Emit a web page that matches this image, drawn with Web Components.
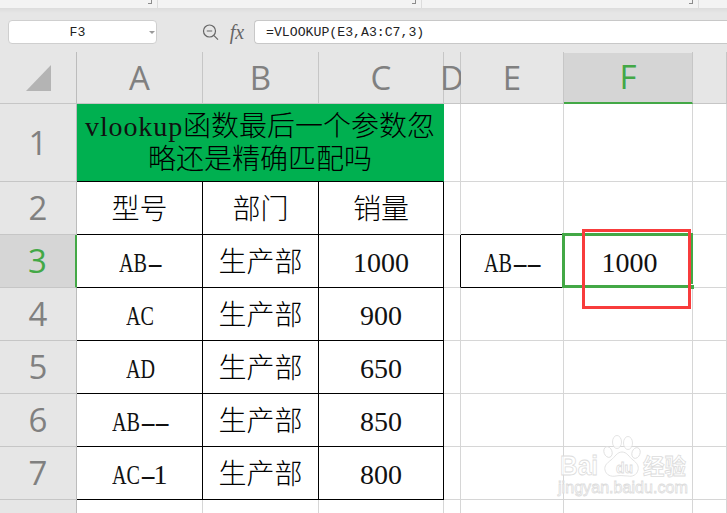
<!DOCTYPE html>
<html lang="zh">
<head>
<meta charset="utf-8">
<title>vlookup</title>
<style>
  html, body { margin: 0; height: 100%; overflow: hidden; background: #fff; }
</style>
</head>
<body>
<sheet-app>
  <ribbon-strip></ribbon-strip>
  <formula-bar name="F3" formula="=VLOOKUP(E3,A3:C7,3)"></formula-bar>
  <sheet-grid>
    <sheet-cell type="corner"><corner-mark></corner-mark></sheet-cell>
    <sheet-cell type="col">A</sheet-cell>
    <sheet-cell type="col">B</sheet-cell>
    <sheet-cell type="col">C</sheet-cell>
    <sheet-cell type="col">D</sheet-cell>
    <sheet-cell type="col">E</sheet-cell>
    <sheet-cell type="col" active>F</sheet-cell>
    <sheet-cell type="col"></sheet-cell>

    <sheet-cell type="row">1</sheet-cell>
    <sheet-cell type="title" style="grid-column: span 3"><half-text>vlookup</half-text>函数最后一个参数忽<br>略还是精确匹配吗</sheet-cell>
    <sheet-cell></sheet-cell><sheet-cell></sheet-cell><sheet-cell></sheet-cell><sheet-cell></sheet-cell>

    <sheet-cell type="row">2</sheet-cell>
    <sheet-cell ink>型号</sheet-cell><sheet-cell ink>部门</sheet-cell><sheet-cell ink>销量</sheet-cell>
    <sheet-cell></sheet-cell><sheet-cell ink-bottom></sheet-cell><sheet-cell></sheet-cell><sheet-cell></sheet-cell>

    <sheet-cell type="row" active>3</sheet-cell>
    <sheet-cell ink><half-text>AB-</half-text></sheet-cell><sheet-cell ink>生产部</sheet-cell><sheet-cell ink><half-text>1000</half-text></sheet-cell>
    <sheet-cell ink-right></sheet-cell>
    <sheet-cell ink><half-text>AB--</half-text></sheet-cell>
    <sheet-cell current><half-text>1000</half-text><cell-marks></cell-marks></sheet-cell>
    <sheet-cell></sheet-cell>

    <sheet-cell type="row">4</sheet-cell>
    <sheet-cell ink><half-text>AC</half-text></sheet-cell><sheet-cell ink>生产部</sheet-cell><sheet-cell ink><half-text>900</half-text></sheet-cell>
    <sheet-cell></sheet-cell><sheet-cell></sheet-cell><sheet-cell></sheet-cell><sheet-cell></sheet-cell>

    <sheet-cell type="row">5</sheet-cell>
    <sheet-cell ink><half-text>AD</half-text></sheet-cell><sheet-cell ink>生产部</sheet-cell><sheet-cell ink><half-text>650</half-text></sheet-cell>
    <sheet-cell></sheet-cell><sheet-cell></sheet-cell><sheet-cell></sheet-cell><sheet-cell></sheet-cell>

    <sheet-cell type="row">6</sheet-cell>
    <sheet-cell ink><half-text>AB--</half-text></sheet-cell><sheet-cell ink>生产部</sheet-cell><sheet-cell ink><half-text>850</half-text></sheet-cell>
    <sheet-cell></sheet-cell><sheet-cell></sheet-cell><sheet-cell></sheet-cell><sheet-cell></sheet-cell>

    <sheet-cell type="row">7</sheet-cell>
    <sheet-cell ink><half-text>AC-1</half-text></sheet-cell><sheet-cell ink>生产部</sheet-cell><sheet-cell ink><half-text>800</half-text></sheet-cell>
    <sheet-cell></sheet-cell><sheet-cell></sheet-cell><sheet-cell></sheet-cell><sheet-cell></sheet-cell>

    <sheet-cell type="row">8</sheet-cell>
    <sheet-cell></sheet-cell><sheet-cell></sheet-cell><sheet-cell></sheet-cell>
    <sheet-cell></sheet-cell><sheet-cell></sheet-cell><sheet-cell></sheet-cell><sheet-cell></sheet-cell>

    <baidu-mark></baidu-mark>
  </sheet-grid>
</sheet-app>

<script>
"use strict";

function define(tag, html, Base = HTMLElement) {
  const template = document.createElement("template");
  template.innerHTML = html;
  customElements.define(tag, class extends Base {
    constructor() {
      super();
      this.attachShadow({ mode: "open" }).appendChild(
        template.content.cloneNode(true),
      );
    }
  });
}

define("sheet-app", `
  <style>
    :host { display: block; width: 727px; height: 513px; overflow: hidden; background: #fff; }
  </style>
  <slot></slot>
`);

define("ribbon-strip", `
  <style>
    :host {
      display: flex;
      height: 8px;
      background: #f3f3f3;
    }
    .group { position: relative; border-right: 1px solid #dcdcdc; box-sizing: border-box; }
    .group::after {
      content: "";
      position: absolute;
      right: 5px;
      top: 0;
      width: 3px;
      height: 3px;
      border-right: 1px solid #8c8c8c;
      border-bottom: 1px solid #8c8c8c;
    }
  </style>
  <div class="group" style="width:158px"></div>
  <div class="group" style="width:264px"></div>
  <div class="group" style="width:277px"></div>
`);

class FormulaBar extends HTMLElement {
  constructor() {
    super();
    this.attachShadow({ mode: "open" }).innerHTML = `
      <style>
        :host {
          display: flex;
          align-items: center;
          box-sizing: border-box;
          height: 44px;
          padding: 12px 0 8px 8px;
          background: linear-gradient(#dcdcdc, #e6e6e6 5px);
          font: 13.2px "Liberation Mono", "Noto Sans CJK SC", monospace;
          color: #222;
        }
        .name {
          position: relative;
          box-sizing: border-box;
          width: 149px;
          height: 24px;
          padding-right: 10px;
          line-height: 24px;
          text-align: center;
          background: #fff;
          border: 1px solid #cfcfcf;
          border-radius: 4px;
        }
        .name::after {
          content: "";
          position: absolute;
          right: 1px;
          top: 10px;
          border: 3.5px solid transparent;
          border-top: 3.5px solid #9a9a9a;
        }
        svg { display: block; margin-left: 45px; }
        .fx {
          width: 16px;
          margin-left: 10px;
          font: italic 20px/22px "Liberation Serif", serif;
          color: #666;
          text-align: center;
        }
        .input {
          flex: 1;
          box-sizing: border-box;
          height: 24px;
          margin-left: 9px;
          padding-left: 11px;
          line-height: 24px;
          background: #fff;
          border: 1px solid #c8c8c8;
          border-right: 0;
          border-radius: 4px 0 0 4px;
          white-space: nowrap;
        }
      </style>
      <div class="name"></div>
      <svg width="17" height="17" viewBox="0 0 17 17" fill="none" stroke="#666" stroke-width="1.2">
        <circle cx="7.5" cy="7" r="6"/>
        <path d="M4.8 7h5.4M12 11.6l4 4"/>
      </svg>
      <div class="fx">fx</div>
      <div class="input"></div>
    `;
  }

  connectedCallback() {
    this.shadowRoot.querySelector(".name").textContent = this.getAttribute("name");
    this.shadowRoot.querySelector(".input").textContent = this.getAttribute("formula");
  }
}
customElements.define("formula-bar", FormulaBar);

define("sheet-grid", `
  <style>
    :host {
      display: grid;
      position: relative;
      grid-template-columns: 77px 126px 116px 125px 17px 103px 129px 34px;
      grid-template-rows: 52px 78px repeat(7, 53px);
    }
  </style>
  <slot></slot>
`);

define("sheet-cell", `
  <style>
    :host {
      display: flex;
      align-items: center;
      justify-content: center;
      box-sizing: border-box;
      min-width: 0;
      padding-top: 2px;
      border-right: 1px solid #d6d6d6;
      border-bottom: 1px solid #d6d6d6;
      font: 300 28px/33px "Liberation Serif", "Noto Sans CJK SC", serif;
      color: #000;
      white-space: nowrap;
      text-align: center;
    }
    :host([ink]) { border-right-color: #000; border-bottom-color: #000; }
    :host([ink-bottom]) { border-bottom-color: #000; }
    :host([ink-right]) { border-right-color: #000; }
    :host([current]) { position: relative; z-index: 2; padding-left: 3px; }

    :host([type="corner"]),
    :host([type="col"]),
    :host([type="row"]) {
      padding-top: 0;
      background: #e6e6e6;
      font: 400 33px/40px "Open Sans", sans-serif;
      color: #808080;
      border-color: #c6c6c6;
    }
    :host([type="row"]) { border-right-color: #bcbcbc; overflow: hidden; }
    :host([type="corner"]) { border-right-color: #bcbcbc; }
    :host([type="col"][active]) {
      background: linear-gradient(#e6e6e6 1px, #d5d5d5 1px);
      color: #43a846;
      border-bottom: 2px solid #43a846;
    }
    :host([type="row"][active]) {
      background: #d6d6d6;
      color: #43a846;
      border-right: 2px solid #43a846;
    }
    :host([type="title"]) {
      display: block;
      padding-top: 6px;
      background: #00b050;
      border-right-color: #00b050;
      border-bottom-color: #000;
    }
  </style>
  <slot></slot>
`);

// half width latin like the sheet's font: each run gets 14px a character
class HalfText extends HTMLElement {
  constructor() {
    super();
    this.attachShadow({ mode: "open" }).innerHTML = `
      <style>
        :host { display: inline-block; font-weight: 400; text-align: left; color: #111; }
        .run { display: inline-block; vertical-align: baseline; }
        .run span { display: inline-block; transform-origin: 0 50%; }
        .upper span { transform: scaleX(.72); }
        .dash span { transform: scaleX(1.75); letter-spacing: -1.3px; }
        .lower span { letter-spacing: .9px; }
      </style>
    `;
  }

  connectedCallback() {
    const runs = this.textContent.match(/[A-Z]+|-+|[a-z]+|[0-9]+/g) || [];
    for (const text of runs) {
      const run = document.createElement("span");
      const kind = /[A-Z]/.test(text) ? "upper" : text[0] === "-" ? "dash" : /[a-z]/.test(text) ? "lower" : "digit";
      run.className = "run " + kind;
      run.style.width = text.length * 14 + "px";
      const inner = document.createElement("span");
      inner.textContent = text;
      run.appendChild(inner);
      this.shadowRoot.appendChild(run);
    }
  }
}
customElements.define("half-text", HalfText);

define("corner-mark", `
  <style>
    :host { display: block; width: 25px; height: 26px; margin: 1px 0 0 1px; background: #b4b4b4; clip-path: polygon(100% 0, 100% 100%, 0 100%); }
  </style>
`);

define("cell-marks", `
  <style>
    :host { position: absolute; inset: 0; }
    .selection {
      position: absolute;
      left: -2px;
      right: -1px;
      top: -2px;
      bottom: -1px;
      border: 3px solid #43a846;
    }
    .handle {
      position: absolute;
      right: -2px;
      bottom: -2px;
      width: 4px;
      height: 4px;
      background: #43a846;
      border-top: 1px solid #fff;
    }
    .note {
      position: absolute;
      left: 18px;
      top: -6px;
      box-sizing: border-box;
      width: 109px;
      height: 80px;
      border: 3px solid #f83c3c;
    }
  </style>
  <div class="selection"></div>
  <div class="handle"></div>
  <div class="note"></div>
`);

define("baidu-mark", `
  <style>
    :host { position: absolute; left: 555px; top: 380px; width: 140px; height: 72px; z-index: 1; }
    svg { display: block; }
    text, path, ellipse { fill: #fff; fill-opacity: .75; stroke: #dcdcdc; stroke-width: .8; }
  </style>
  <svg width="140" height="72" viewBox="0 0 140 72">
    <text x="5" y="43" font-family="Liberation Sans" font-weight="700" font-size="27" textLength="38" lengthAdjust="spacingAndGlyphs">Bai</text>
    <ellipse cx="53" cy="20" rx="4" ry="5.5" transform="rotate(-20 53 20)"/>
    <ellipse cx="62" cy="10" rx="4.5" ry="6.5"/>
    <ellipse cx="73" cy="11" rx="4.5" ry="6.5"/>
    <ellipse cx="81" cy="21" rx="4" ry="5.5" transform="rotate(20 81 21)"/>
    <path d="M67 20c5 0 7 5 11 8 4 3 6 6 5 10-1 5-6 7-10 6-4 0-8-1-12 0-5 1-10-1-11-6-1-4 2-7 6-10 4-3 6-8 11-8z"/>
    <text x="61" y="41" font-family="Liberation Sans" font-weight="700" font-size="15" textLength="17" lengthAdjust="spacingAndGlyphs">du</text>
    <text x="88" y="42" font-family="Noto Sans CJK SC" font-weight="700" font-size="21.5">经验</text>
    <text x="3" y="61" font-family="Liberation Sans" font-size="17" textLength="130" lengthAdjust="spacingAndGlyphs">jingyan.baidu.com</text>
  </svg>
`);
</script>
</body>
</html>
